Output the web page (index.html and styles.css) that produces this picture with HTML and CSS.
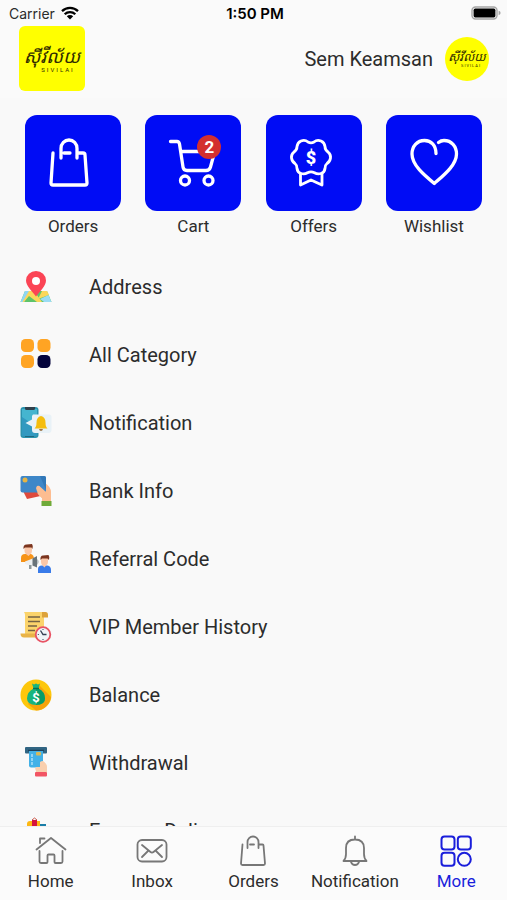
FILE: index.html
```html
<!DOCTYPE html>
<html lang="en">
<head>
    <meta charset="UTF-8">
    <meta name="viewport" content="width=device-width, initial-scale=1">
    <title>Sivilai - More</title>
    <link rel="stylesheet" href="styles.css">
</head>
<body>
<!-- Status bar -->
<div class="status-bar">
    <div class="carrier">
        <span>Carrier</span>
        <svg class="wifi" viewBox="0 0 18 14" aria-hidden="true">
            <g fill="none" stroke="#000" stroke-width="2.3">
                <path d="M1 5.2a11.5 11.5 0 0 1 16 0"/>
                <path d="M3.7 8.2a7.6 7.6 0 0 1 10.6 0"/>
            </g>
            <path d="M9 13.6L5.8 10.3a4.6 4.6 0 0 1 6.4 0z"/>
        </svg>
    </div>
    <div class="clock">1:50 PM</div>
    <svg class="battery" viewBox="0 0 30 14" aria-label="Battery full">
        <rect x="1" y="1" width="25" height="12" rx="3.5" fill="#f9f9f9" stroke="#a5a5a5" stroke-width="1.4"/>
        <rect x="2.6" y="2.6" width="21.8" height="8.8" rx="1.6"/>
        <path d="M27.6 4.8q2 .6 2 2.2t-2 2.2z" fill="#a5a5a5"/>
    </svg>
</div>

<!-- Header -->
<header class="header">
    <a class="logo" href="#">
        <span class="logo-name" lang="km">ស៊ីវីល័យ</span>
        <span class="logo-sub">SIVILAI</span>
    </a>
    <a class="profile" href="#">
        <span>Sem Keamsan</span>
        <span class="avatar">
            <span class="logo-name" lang="km">ស៊ីវីល័យ</span>
            <span class="logo-sub">SIVILAI</span>
        </span>
    </a>
</header>

<main class="content">
    <!-- Shortcuts -->
    <div class="tiles">
        <a class="tile" href="#">
            <span class="tile-box">
                <svg viewBox="0 0 96 96">
                    <path d="M28 38L26 68Q26 70 28 70H60Q62 70 62 68L60 40Q60 38 58 38H52M36 43V33.500a8 8.500 0 0 1 16 0V43M39 38H45"/>
                </svg>
            </span>
            <span>Orders</span>
        </a>
        <a class="tile" href="#">
            <span class="tile-box">
                <svg viewBox="0 0 96 96">
                    <path d="M25.500 26.500H32Q34 26.500 34.500 29L38 52Q38.500 55.500 42 55.500H61Q64.500 55.500 65.500 52L69 39Q69.500 36.500 67 36.500H37"/>
                    <circle cx="40" cy="65.500" r="4.500"/>
                    <circle cx="63.500" cy="65.500" r="4.500"/>
                </svg>
                <span class="badge">2</span>
            </span>
            <span>Cart</span>
        </a>
        <a class="tile" href="#">
            <span class="tile-box">
                <svg class="thin" viewBox="0 0 96 96">
                    <path d="M35 26Q39 24.500 42 27Q45 28.800 48 27Q51 24.500 55 26Q58.500 27.500 59 31.500Q59 35 62 37Q65 39.500 64.500 43Q64 46.500 61 48.500Q59 50 59 53.500Q58.500 57.500 55 58.500Q51.500 59.500 48.500 57.700Q45 56 41.500 57.700Q38.500 59.500 35 58.500Q31.500 57.500 31 53.500Q31 50 29 48.500Q26 46.500 25.500 43Q25 39.500 28 37Q31 35 31 31.500Q31.500 27.500 35 26Z"/>
                    <path d="M34.500 59V70L45 65L56 70V59"/>
                    <text x="45" y="49" text-anchor="middle">$</text>
                </svg>
            </span>
            <span>Offers</span>
        </a>
        <a class="tile" href="#">
            <span class="tile-box">
                <svg viewBox="0 0 96 96">
                    <path d="M50 38.500C50 30 45 25.500 38.500 25.500C31 25.500 26 31.500 26 39C26 50 38 60 48.300 68.500C58 60 70.500 50 70.500 39C70.500 31.500 65.500 25.500 58 25.500Q55 25.500 52.500 27.500"/>
                </svg>
            </span>
            <span>Wishlist</span>
        </a>
    </div>

    <!-- Menu list -->
    <nav class="menu">
        <a href="#">
            <svg viewBox="0 0 32 32">
                <path d="M5 20H27L31.500 31H0.500z" fill="#5ec46a"/>
                <path d="M5 20H10L4 31H.5z" fill="#8fd6f5"/>
                <path d="M9 20H14L22 31H17L9 25L4 31H2.500z" fill="#fbd75b"/>
                <path d="M22 20H27L29 24L18 28z" fill="#fbd75b"/>
                <path d="M28.500 24L31.500 31H24L20 28z" fill="#9bdcf5"/>
                <path d="M16 25.500C12 20 6 15 6 9.500a10 9.500 0 0 1 20 0C26 15 20 20 16 25.500z" fill="#fb4455"/>
                <circle cx="16" cy="10" r="4" fill="#fff"/>
            </svg>
            <span>Address</span>
        </a>
        <a href="#">
            <svg viewBox="0 0 32 32">
                <rect x="1" y="0" width="13" height="13" rx="4.500" fill="#ffa423"/>
                <rect x="17.500" y="0" width="13" height="13" rx="4.500" fill="#ffa423"/>
                <rect x="1" y="16" width="13" height="13" rx="4.500" fill="#ffa423"/>
                <rect x="17.500" y="16" width="13" height="13" rx="4.500" fill="#04043c"/>
            </svg>
            <span>All Category</span>
        </a>
        <a href="#">
            <svg viewBox="0 0 32 32">
                <rect x=".5" y="0" width="18" height="31" rx="3" fill="#2b93ae"/>
                <path d="M2 2H17V29H2z" fill="#45b5cf"/>
                <path d="M2 10L17 20V29H2z" fill="#3299c0"/>
                <path d="M5 0H15V1.500Q15 3 13.500 3H6.500Q5 3 5 1.500z" fill="#30404c"/>
                <path d="M5 29.500H14" stroke="#20677d"/>
                <path d="M13 7.500H29Q31.500 7.500 31.500 10V23Q31.500 26 28.500 26H15Q12 26 12 23V19.500L5.500 16L12 12.500V9z" fill="#e9f2f7"/>
                <path d="M14.500 21.500Q16.500 20 16.500 15.500Q16.500 10 21 9Q25.500 10 25.500 15.500Q25.500 20 27.500 21.500z" fill="#f5bd0d"/>
                <path d="M19 22H23Q22.500 24 21 24T19 22" fill="#9c7447"/>
            </svg>
            <span>Notification</span>
        </a>
        <a href="#">
            <svg viewBox="0 0 32 32">
                <path d="M3 16L23 12L25 20L7 24z" fill="#df4a3d"/>
                <path d="M25 8Q31 12 31 17V26H22V23Q17 20 15.500 13Q18 10 20 14L25 16z" fill="#fdbd91"/>
                <rect x=".5" y="1" width="25.500" height="16.500" rx="2" fill="#3e87c8"/>
                <path d="M20 1H24Q26 1 26 3V15Z" fill="#3278b8"/>
                <circle cx="5" cy="5" r="2.500" fill="#e5b444"/>
                <path d="M17 11Q19 10 20.500 12L26 17L28 26H22V23Q17 18 16 13z" fill="#fdbd91"/>
                <rect x="21.500" y="26" width="10" height="5" fill="#70aa39"/>
            </svg>
            <span>Bank Info</span>
        </a>
        <a href="#">
            <svg viewBox="0 0 32 32">
                <path d="M1 19V15Q1 11 5 11H11Q14 12 14 16V19z" fill="#f69318"/>
                <path d="M4.500 3H12V8Q12 10.500 10 11.500L8.500 13L6.500 11.500Q4.500 10 4.500 8z" fill="#fbc7a8"/>
                <path d="M3.500 6Q3 1.500 6.500 1.500L12 1Q13.500 3 12.500 6L11.500 4.500H5z" fill="#7b351f"/>
                <path d="M5 18.500L14 15V24L5 21z" fill="#eceff1"/>
                <path d="M9 22H11.500V26H9z" fill="#8f999c"/>
                <path d="M12.500 15.500L17 13V24.500L12.500 22.500z" fill="#68737a"/>
                <path d="M17 16Q20.500 18.500 17 22" fill="#b8c0c4"/>
                <path d="M18 30V26Q18 22.500 22 22.500H27.500Q31 23 31 27V30z" fill="#397be9"/>
                <path d="M21 14H28V19Q28 21.500 26 22.500L24.500 24.500L22.500 22.500Q21 21 21 19z" fill="#fbc7a8"/>
                <path d="M20.500 17Q20 12.500 23 12.500L28.500 12Q30 14 29 17L27.500 15.500H22z" fill="#7b351f"/>
            </svg>
            <span>Referral Code</span>
        </a>
        <a href="#">
            <svg viewBox="0 0 32 32">
                <path d="M4 1H24V26H5V4Q5 2.500 4 1z" fill="#fbd36b"/>
                <path d="M22 1H25.500Q28 1 28 4V6.500H22z" fill="#dda23a"/>
                <path d="M.5 22.500H17V26.500H4Q.5 26.500 .5 22.500z" fill="#e9b348"/>
                <path d="M8 6H20M8 10.500H20M8 15H17M8 19.500H15" stroke="#756344" stroke-width="1.500"/>
                <circle cx="23" cy="23.500" r="7.300" fill="#eff4f8" stroke="#e85364" stroke-width="1.800"/>
                <path d="M20.500 19.500L23 23.500H26.500" stroke="#344054" stroke-width="1.400" fill="none"/>
                <path d="M23 18V19M23 28V29M17.800 23.500H18.800" stroke="#344054"/>
            </svg>
            <span>VIP Member History</span>
        </a>
        <a href="#">
            <svg viewBox="0 0 32 32">
                <circle cx="16" cy="16" r="15.500" fill="#fdc70c"/>
                <path d="M19 6L31 18A15.500 15.500 0 0 1 16 31.500L8 25z" fill="#f7a30c"/>
                <path d="M12 4.500L14 5.500L16 4.500L18 5.500L20 4.500L18.500 9.500Q25 13 25 19.500Q25 26 16 26T7 19.500Q7 13 13.500 9.500z" fill="#18b57d"/>
                <path d="M16 9.500H18.500Q25 13 25 19.500Q25 26 16 26z" fill="#079c68"/>
                <path d="M13 9.500H19" stroke="#086c52" stroke-width="1.500"/>
                <text class="coin" x="16" y="23" text-anchor="middle">$</text>
            </svg>
            <span>Balance</span>
        </a>
        <a href="#">
            <svg viewBox="0 0 32 32">
                <rect x="5" y="0" width="22" height="6.500" rx="1" fill="#316583"/>
                <path d="M8 3.500H24" stroke="#1e435d" stroke-width="1.500"/>
                <path d="M18 16Q21 17 22 14Q27 16 27 21V25H16z" fill="#f9cfae"/>
                <path d="M9 4H23V20.500H11Q9 20.500 9 18.500z" fill="#43b1e7"/>
                <path d="M12 7V18" stroke="#bce7fb" stroke-width="1.300" stroke-dasharray="3 1"/>
                <rect x="16" y="5" width="5" height="3.500" rx="1" fill="#d8b95a"/>
                <path d="M20 15Q23 13 24 15Q27 17 27 21Q26 25 24 25H17Q14 22 16 20L20 20z" fill="#f9cfae"/>
                <rect x="15" y="25" width="12" height="4.500" rx="1" fill="#f25564"/>
            </svg>
            <span>Withdrawal</span>
        </a>
        <a href="#">
            <svg viewBox="0 0 32 32">
                <path d="M7 14V9Q7 6 10 6H20V14H7z" fill="#fdb813"/>
                <path d="M12 5H17V14H12z" fill="#d5143d"/>
                <path d="M12 5L14.500 3L17 5" stroke="#c9574a" fill="none"/>
                <path d="M20 9H26V14H20z" fill="#1a7ea8"/>
            </svg>
            <span>Express Delivery</span>
        </a>
    </nav>
</main>

<!-- Bottom tabs -->
<nav class="tabs">
    <a href="#">
        <svg viewBox="0 0 32 32">
            <path d="M1.500 14.500L16 3L30.500 14.500M5 8V3.500H9.500M4.500 16V26.500Q4.500 28 6 28H11.500Q12.500 28 12.500 27V20.500Q12.500 19.500 13.500 19.500H18.500Q19.500 19.500 19.500 20.500V27Q19.500 28 20.500 28H26Q27.500 28 27.500 26.500V16"/>
        </svg>
        <span>Home</span>
    </a>
    <a href="#">
        <svg viewBox="0 0 32 32">
            <rect x="1.500" y="5" width="29" height="21.500" rx="4.500"/>
            <path d="M6 10L14.500 17Q16 18.200 17.500 17L26 10M6 22L12 16M26 22L20 16"/>
        </svg>
        <span>Inbox</span>
    </a>
    <a href="#">
        <svg viewBox="0 0 32 32">
            <path d="M5.500 9.500L4 28.500Q4 30 5.500 30H26.500Q28 30 28 28.500L26.500 10.500Q26.500 9.500 25.500 9.500H21.500M10.500 13V7a5.500 5.500 0 0 1 11 0V13M13 9.500H17"/>
        </svg>
        <span>Orders</span>
    </a>
    <a href="#">
        <svg viewBox="0 0 32 32">
            <path d="M16 1.500V4M4.500 26Q7 23.500 7 19V13Q7 4.500 16 4.500T25 13V19Q25 23.500 27.500 26zM12 27Q13 30 16 30T20 27"/>
        </svg>
        <span>Notification</span>
    </a>
    <a class="active" href="#">
        <svg viewBox="0 0 32 32">
            <rect x="1.500" y="1.500" width="13" height="13" rx="3"/>
            <rect x="17.800" y="1.500" width="13" height="13" rx="3"/>
            <rect x="1.500" y="17.800" width="13" height="13" rx="3"/>
            <circle cx="24.300" cy="24.300" r="6.500"/>
        </svg>
        <span>More</span>
    </a>
</nav>
</body>
</html>
```
FILE: styles.css
```css
* { box-sizing: border-box; margin: 0; padding: 0; }
body {
    font-family: Roboto, Arial, sans-serif;
    background: #f9f9f9;
    color: #2c2c2c;
    display: flex;
    flex-direction: column;
    height: 100vh;
}
a { color: inherit; text-decoration: none; }
svg { display: block; }

/* Status bar */
.status-bar {
    display: grid;
    grid-template-columns: 1fr auto 1fr;
    align-items: center;
    height: 26px;
    padding: 0 6px 0 9px;
    font-family: Inter, sans-serif;
    font-size: 14px;
    background: #fafafa;
}
.carrier { display: flex; align-items: center; gap: 6px; }
.wifi { width: 18px; height: 14px; }
.clock { font-size: 15px; font-weight: 600; color: #000; }
.battery { width: 30px; height: 14px; justify-self: end; }

/* Header */
.header {
    display: flex;
    justify-content: space-between;
    align-items: flex-start;
    height: 72px;
    padding: 0 18px 0 19px;
    background: #fafafa;
}
.logo, .avatar {
    display: flex;
    flex-direction: column;
    align-items: center;
    justify-content: center;
    background: #ff0;
    color: #2e2a00;
}
.logo {
    width: 66px;
    height: 65px;
    border-radius: 6px;
}
.logo-name {
    font-family: "Noto Sans Khmer", "Noto Serif Khmer", "Noto Sans", sans-serif;
    font-style: italic;
    font-size: 18px;
    line-height: 22px;
    white-space: nowrap;
}
.logo-sub {
    padding-left: 12px;
    font-size: 6px;
    line-height: 6px;
    letter-spacing: 2px;
}
.profile {
    display: flex;
    align-items: center;
    gap: 12px;
    padding-top: 11px;
    font-size: 20px;
}
.avatar {
    width: 44px;
    height: 44px;
    border-radius: 50%;
}
.avatar .logo-name { font-size: 12px; line-height: 14px; }
.avatar .logo-sub { padding-left: 8px; font-size: 4px; line-height: 4px; letter-spacing: 1px; }

/* Content */
.content {
    flex: 1;
    min-height: 0;
    overflow-y: auto;
    scrollbar-width: none;
    padding-top: 17px;
}
.tiles {
    display: grid;
    grid-template-columns: repeat(4, 1fr);
    padding: 0 13px;
}
.tile {
    display: flex;
    flex-direction: column;
    align-items: center;
    gap: 5px;
    font-size: 17px;
    line-height: 20px;
}
.tile-box {
    position: relative;
    width: 96px;
    height: 96px;
    border-radius: 12px;
    background: #000cf5;
}
.tile-box svg {
    fill: none;
    stroke: #fff;
    stroke-width: 3.3;
    stroke-linecap: round;
    stroke-linejoin: round;
}
.tile-box .thin { stroke-width: 2.8; }
.tile-box text {
    fill: #fff;
    stroke: none;
    font-size: 18px;
    font-weight: 900;
}
.badge {
    position: absolute;
    top: 20px;
    right: 20px;
    width: 24px;
    height: 24px;
    border-radius: 50%;
    background: #d32f2f;
    color: #fff;
    font-size: 17px;
    font-weight: bold;
    line-height: 24px;
    text-align: center;
}

/* Menu list */
.menu { padding-top: 17px; }
.menu a {
    display: flex;
    align-items: center;
    gap: 37px;
    height: 68px;
    padding: 0 20px;
    font-size: 20px;
}
.menu svg { width: 32px; height: 32px; }
.coin { fill: #fff; font-size: 13px; font-weight: bold; }

/* Bottom tabs */
.tabs {
    display: grid;
    grid-template-columns: repeat(5, 1fr);
    border-top: 1px solid #efefef;
    background: #fbfbfb;
}
.tabs a {
    display: flex;
    flex-direction: column;
    align-items: center;
    gap: 4px;
    padding: 8px 0 9px;
    font-size: 17px;
    line-height: 20px;
}
.tabs svg {
    width: 32px;
    height: 32px;
    fill: none;
    stroke: #777;
    stroke-width: 1.8;
    stroke-linecap: round;
    stroke-linejoin: round;
}
.tabs .active { color: #1a1edb; }
.tabs .active svg { stroke: #1a1edb; stroke-width: 2; }
```
